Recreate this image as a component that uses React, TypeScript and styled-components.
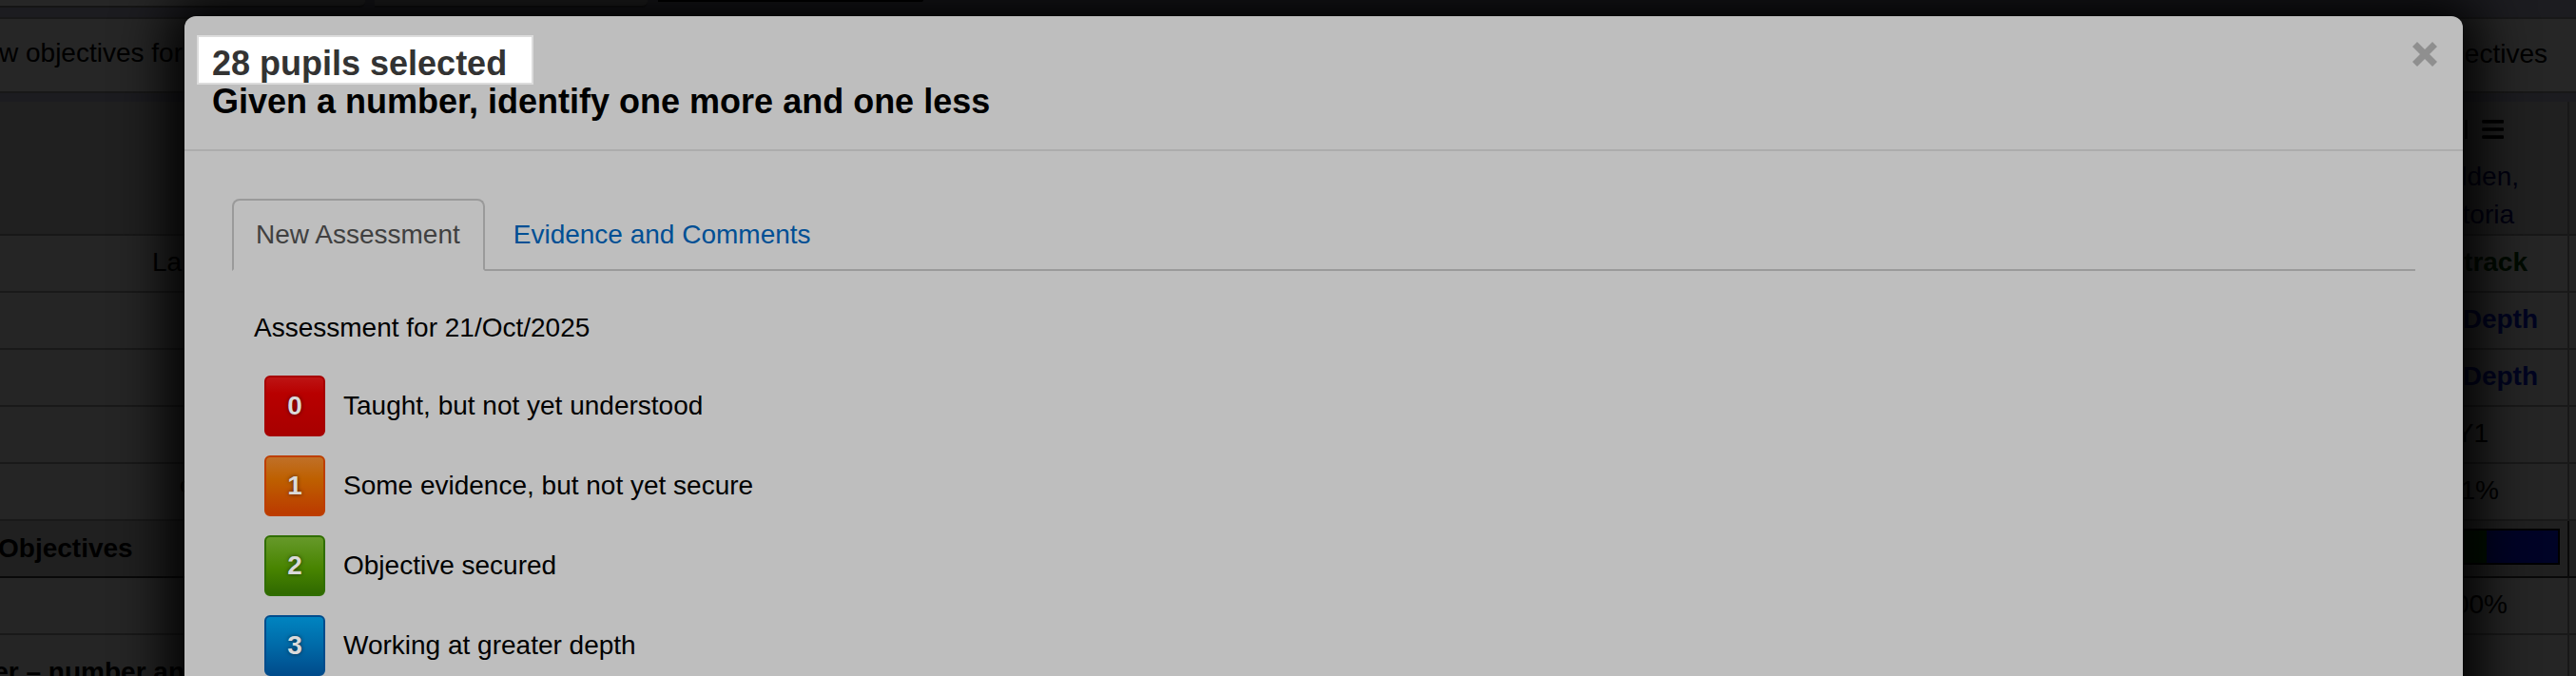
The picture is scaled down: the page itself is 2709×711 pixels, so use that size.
import React from 'react';
import styled, { createGlobalStyle } from 'styled-components';

const GlobalStyle = createGlobalStyle`
  * {
    box-sizing: border-box;
  }

  body {
    margin: 0;
    overflow: hidden;
    background: #1c1c20;
    font-family: "Liberation Sans", Arial, sans-serif;
    font-size: 28px;
    line-height: 40px;
    color: #000;
  }
`;

const Screen = styled.div`
  display: grid;
  grid-template: 711px / 2709px;
  width: 2709px;
  height: 711px;
  overflow: hidden;

  > * {
    grid-area: 1 / 1;
  }
`;

const Page = styled.div`
  height: 711px;
  overflow: hidden;
`;

const TopPanels = styled.div`
  display: flex;
  align-items: flex-start;
  height: 18px;
`;

const TopPanel = styled.div<{ $width: number; $gap?: number; $dark?: boolean }>`
  width: ${({ $width }) => $width}px;
  height: ${({ $dark }) => ($dark ? 2 : 8)}px;
  margin-right: ${({ $gap }) => $gap || 0}px;
  background: ${({ $dark }) => ($dark ? '#000' : '#262626')};
  border-bottom: ${({ $dark }) => ($dark ? 'none' : '2px solid #151515')};
  border-bottom-right-radius: 6px;
`;

const Toolbar = styled.div`
  display: flex;
  justify-content: space-between;
  height: 80px;
  padding: 16px 30px 0 0;
  background: #262626;
  border-top: 2px solid #181818;
  border-bottom: 2px solid #181818;
`;

const ToolbarLabel = styled.span<{ $top?: number }>`
  padding-top: ${({ $top }) => $top || 0}px;
  margin-left: -1px;
`;

const Tables = styled.div`
  display: flex;
  justify-content: space-between;
  margin-top: 9px;
`;

const PupilColumns = styled.div`
  display: flex;
`;

const Column = styled.div<{ $width: number; $bordered?: boolean }>`
  width: ${({ $width }) => $width}px;

  > * {
    border-right: ${({ $bordered }) => ($bordered ? '2px solid #181818' : 'none')};
  }
`;

const HeadCell = styled.div`
  display: flex;
  flex-direction: column;
  align-items: flex-end;
  height: 141px;
  background: #202020;
  border-bottom: 2px solid #181818;
`;

const Name = styled.span<{ $right: number }>`
  padding-right: ${({ $right }) => $right}px;
  color: #000010;
`;

const MenuIcon = styled.svg`
  margin: 19px 65px 20px 0;
`;

interface CellProps {
  $left?: number;
  $right?: number;
  $top?: number;
  $color?: string;
  $bold?: boolean;
}

const Cell = styled.div<CellProps>`
  display: flex;
  justify-content: ${({ $left }) => ($left === undefined ? 'flex-end' : 'flex-start')};
  height: 60px;
  padding: ${({ $top }) => $top || 8}px ${({ $right }) => $right || 0}px 0 ${({ $left }) => $left || 0}px;
  white-space: nowrap;
  color: ${({ $color }) => $color || '#000'};
  font-weight: ${({ $bold }) => ($bold ? 'bold' : 'normal')};
  background: #252525;
  border-bottom: 2px solid #191919;
`;

const SectionCell = styled(Cell)`
  background: #202020;
  border-color: #090909;
`;

const SectionTitle = styled.span`
  margin-left: -2px;
`;

const Progress = styled.div`
  display: flex;
  width: 102px;
  height: 38px;
  border: 2px solid #000;
  border-left: none;
`;

const ProgressPart = styled.div<{ $width: number; $color: string }>`
  width: ${({ $width }) => $width}px;
  background: ${({ $color }) => $color};
`;

const Modal = styled.div`
  width: 2396px;
  height: 760px;
  margin: 17px 0 0 194px;
  background: #bebebe;
  border-radius: 12px;
  box-shadow: 0 0 56px 17px #000;
`;

const ModalHeader = styled.div`
  display: flex;
  justify-content: space-between;
  height: 142px;
  padding: 20px 27px 0 13px;
  border-bottom: 2px solid #acacac;
`;

const Title = styled.h3`
  margin: 0;
  font-size: 36px;
  line-height: 40px;
`;

const Highlight = styled.div`
  width: 354px;
  height: 52px;
  margin-bottom: -2px;
  padding: 8px 0 0 14px;
  background: #fff;
  border: 2px solid #dcdcdc;
  color: #333;
`;

const Objective = styled.div`
  padding-left: 16px;
`;

const CloseIcon = styled.svg`
  margin-top: 7px;
`;

const ModalBody = styled.div`
  padding: 50px 50px 0;
`;

const Tabs = styled.div`
  display: flex;
  height: 76px;
  border-bottom: 2px solid #9a9a9a;
`;

const Tab = styled.div<{ $active?: boolean }>`
  height: 76px;
  padding: 16px ${({ $active }) => ($active ? 24 : 28)}px 0 ${({ $active }) => ($active ? 23 : 28)}px;
  border: 2px solid ${({ $active }) => ($active ? '#9a9a9a' : 'transparent')};
  border-bottom-color: ${({ $active }) => ($active ? '#bebebe' : 'transparent')};
  border-radius: 8px 8px 0 0;
  color: ${({ $active }) => ($active ? '#404040' : '#004f94')};
`;

const AssessmentDate = styled.div`
  padding: 40px 0 0 23px;
`;

const Grades = styled.div`
  display: flex;
  flex-direction: column;
  gap: 20px;
  padding: 30px 0 0 34px;
`;

const Grade = styled.div`
  display: flex;
  align-items: center;
  gap: 19px;
`;

const GradeButton = styled.div<{ $from: string; $mid: string; $to: string; $border: string }>`
  width: 64px;
  height: 64px;
  border: 2px solid ${({ $border }) => $border};
  border-radius: 6px;
  background: linear-gradient(${({ $from, $mid, $to }) => `${$from}, ${$mid}, ${$to}`});
  color: #dadada;
  font-weight: bold;
  line-height: 60px;
  text-align: center;
  text-shadow: 0 0 4px rgba(0, 0, 0, 0.6);
`;

const grades = [
  { value: 0, label: 'Taught, but not yet understood', from: '#bd1414', mid: '#b80000 28%', to: '#a80000', border: '#a60000' },
  { value: 1, label: 'Some evidence, but not yet secure', from: '#c07028', mid: '#be6000 38%', to: '#bb3a00', border: '#bd3e00' },
  { value: 2, label: 'Objective secured', from: '#66992a', mid: '#488400 55%', to: '#2f6900', border: '#306e00' },
  { value: 3, label: 'Working at greater depth', from: '#0084c0', mid: '#006aa8 50%', to: '#004c8c', border: '#004c8c' },
];

const App = () => {
  return (
    <>
      <GlobalStyle />
      <Screen>
        <Page>
          <TopPanels>
            <TopPanel $width={384} $gap={10} />
            <TopPanel $width={287} $gap={11} />
            <TopPanel $width={279} $dark />
          </TopPanels>
          <Toolbar>
            <ToolbarLabel>w objectives for</ToolbarLabel>
            <ToolbarLabel $top={1}>ectives</ToolbarLabel>
          </Toolbar>
          <Tables>
            <Column $width={194}>
              <HeadCell />
              <Cell $left={160}>La</Cell>
              <Cell />
              <Cell />
              <Cell />
              <Cell $left={189}>%</Cell>
              <SectionCell $bold $left={0} $top={9}>
                <SectionTitle>Objectives</SectionTitle>
              </SectionCell>
              <Cell />
              <Cell $bold $top={19}>er – number an</Cell>
            </Column>
            <PupilColumns>
              <Column $width={112} $bordered>
                <HeadCell>
                  <MenuIcon width="45" height="22" viewBox="0 0 45 22">
                    <rect width="3" height="22" />
                    <rect x="20" width="25" height="4" rx="1" />
                    <rect x="20" y="9" width="25" height="4" rx="1" />
                    <rect x="20" y="18" width="25" height="4" rx="1" />
                  </MenuIcon>
                  <Name $right={51}>lden,</Name>
                  <Name $right={56}>toria</Name>
                </HeadCell>
                <Cell $bold $right={42} $color="#000a00">-track</Cell>
                <Cell $bold $right={31} $color="#000420">Depth</Cell>
                <Cell $bold $right={31} $color="#000420">Depth</Cell>
                <Cell $right={83}>Y1</Cell>
                <Cell $right={72}>1%</Cell>
                <SectionCell $right={8}>
                  <Progress>
                    <ProgressPart $width={25} $color="#001000" />
                    <ProgressPart $width={75} $color="#000326" />
                  </Progress>
                </SectionCell>
                <Cell $right={63}>00%</Cell>
                <Cell />
              </Column>
              <Column $width={7}>
                <HeadCell />
                <Cell />
                <Cell />
                <Cell />
                <Cell />
                <Cell />
                <SectionCell />
                <Cell />
                <Cell />
              </Column>
            </PupilColumns>
          </Tables>
        </Page>
        <Modal>
          <ModalHeader>
            <Title>
              <Highlight>28 pupils selected</Highlight>
              <Objective>Given a number, identify one more and one less</Objective>
            </Title>
            <CloseIcon width="26" height="26" viewBox="0 0 26 26" fill="#8f8f8f">
              <path d="M5 0 13 8 21 0 26 5 18 13 26 21 21 26 13 18 5 26 0 21 8 13 0 5Z" />
            </CloseIcon>
          </ModalHeader>
          <ModalBody>
            <Tabs>
              <Tab $active>New Assessment</Tab>
              <Tab>Evidence and Comments</Tab>
            </Tabs>
            <AssessmentDate>Assessment for 21/Oct/2025</AssessmentDate>
            <Grades>
              {grades.map((grade) => (
                <Grade key={grade.value}>
                  <GradeButton $from={grade.from} $mid={grade.mid} $to={grade.to} $border={grade.border}>
                    {grade.value}
                  </GradeButton>
                  {grade.label}
                </Grade>
              ))}
            </Grades>
          </ModalBody>
        </Modal>
      </Screen>
    </>
  );
};

export default App;
